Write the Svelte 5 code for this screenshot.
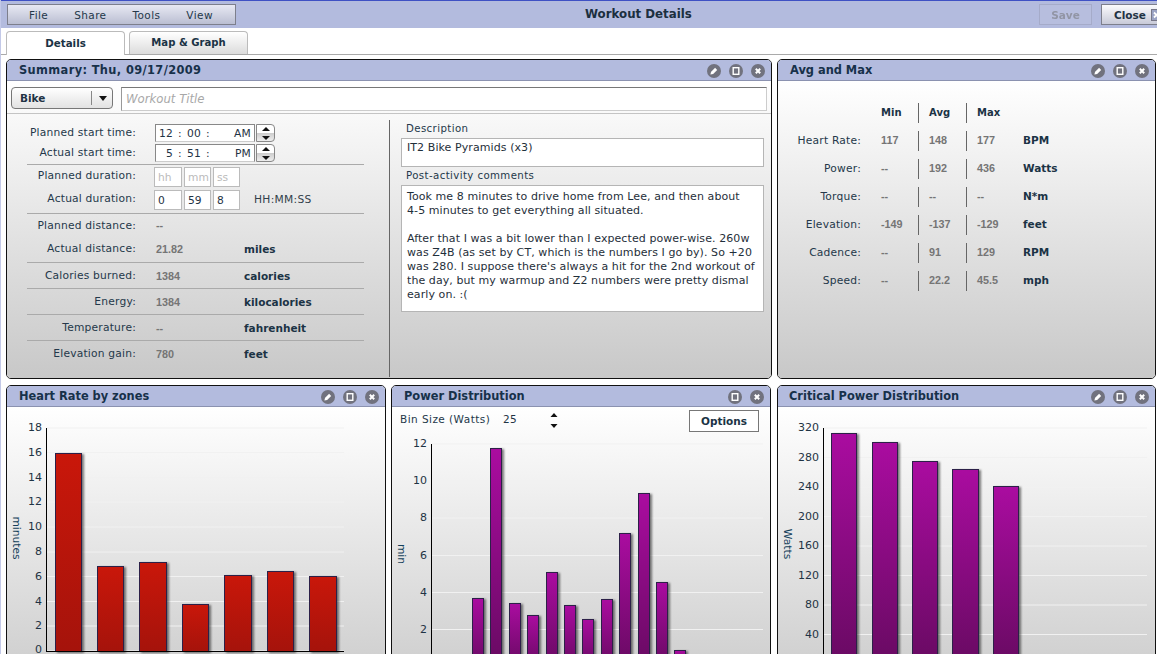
<script>
  const menu = ['File', 'Share', 'Tools', 'View'];
  const stats = [
    { label: 'Heart Rate:', min: '117', avg: '148', max: '177', unit: 'BPM' },
    { label: 'Power:', min: '--', avg: '192', max: '436', unit: 'Watts' },
    { label: 'Torque:', min: '--', avg: '--', max: '--', unit: 'N*m' },
    { label: 'Elevation:', min: '-149', avg: '-137', max: '-129', unit: 'feet' },
    { label: 'Cadence:', min: '--', avg: '91', max: '129', unit: 'RPM' },
    { label: 'Speed:', min: '--', avg: '22.2', max: '45.5', unit: 'mph' }
  ];
  const measures = [
    { label: 'Calories burned:', value: '1384', unit: 'calories' },
    { label: 'Energy:', value: '1384', unit: 'kilocalories' },
    { label: 'Temperature:', value: '--', unit: 'fahrenheit' },
    { label: 'Elevation gain:', value: '780', unit: 'feet' }
  ];
  const hr = {
    view: '7 407 378 320', gridEnd: 344, axis: 46, top: 428, bottom: 651,
    ticks: [[18,428],[16,452.5],[14,477.5],[12,502],[10,527],[8,552],[6,576.5],[4,601.5],[2,626],[0,651,650]],
    bars: [[55,82,453],[97,124,566],[139,167,562],[182,209,604],[224,252,575],[267,294,571],[309,337,576]],
    title: 'minutes', tx: 16, ty: 538, fill: 'url(#red)', labelEnd: 42
  };
  const pw = {
    view: '392 437 378 290', gridEnd: 763, axis: 431, top: 444, bottom: 666,
    ticks: [[12,444],[10,481],[8,518],[6,555.5],[4,592.5],[2,629.5]],
    bars: [[472,484,598],[490,502,448],[509,521,603],[527,539,615],[546,558,572],[564,576,605],[582,594,619],[601,613,599],[619,631,533],[638,650,493],[656,668,582],[674,686,650]],
    title: 'min', tx: 401, ty: 554, fill: 'url(#purple)', labelEnd: 427
  };
  const cp = {
    view: '778 407 377 320', gridEnd: 1147, axis: 823, top: 428, bottom: 664,
    ticks: [[320,428],[280,457.5],[240,487],[200,516.5],[160,546],[120,575.5],[80,605],[40,634.5]],
    bars: [[831,857,433],[872,898,442],[912,938,461],[952,979,469],[993,1019,486]],
    title: 'Watts', tx: 787, ty: 544, fill: 'url(#purple)', labelEnd: 819
  };
</script>

{#snippet tools(pencil)}
  <div class="tools">
    {#if pencil}
      <svg class="tool" viewBox="0 0 14 14"><circle cx="7" cy="7" r="7" /><path class="w" d="M3.4 10.6l.7-2.8 4-4 2.1 2.1-4 4z" /></svg>
    {/if}
    <svg class="tool" viewBox="0 0 14 14"><circle cx="7" cy="7" r="7" /><rect x="4.2" y="3.7" width="5.6" height="6.6" class="o" /></svg>
    <svg class="tool" viewBox="0 0 14 14"><circle cx="7" cy="7" r="7" /><path class="x" d="M4.8 4.8l4.4 4.4M9.2 4.8l-4.4 4.4" /></svg>
  </div>
{/snippet}

{#snippet spinner()}
  <span class="spin">
    <svg width="20" height="19" viewBox="0 0 20 19"><path d="M6 7l4-4 4 4z" /><path d="M6 12h8l-4 4z" /></svg>
  </span>
{/snippet}

{#snippet chart(c)}
  <svg class="chart" viewBox={c.view}>
    {#each c.ticks as t}
      <line x1={c.axis + 1} x2={c.gridEnd} y1={t[1]} y2={t[1]} class="grid" />
      <text x={c.labelEnd} y={(t[2] ?? t[1]) + 3} text-anchor="end" class="tick">{t[0]}</text>
    {/each}
    {#each c.bars as b}
      <rect x={b[0] + 0.5} y={b[2] + 0.5} width={b[1] - b[0] - 1} height={c.bottom - b[2]} fill={c.fill} class="bar" />
    {/each}
    <line x1={c.axis + 0.5} x2={c.axis + 0.5} y1={c.top} y2={c.bottom + 1} class="axis" />
    <line x1={c.axis} x2={c.gridEnd} y1={c.bottom + 0.5} y2={c.bottom + 0.5} class="axis" />
    <text class="ytitle" transform="translate({c.tx} {c.ty}) rotate(90)" text-anchor="middle" dy="3.5">{c.title}</text>
  </svg>
{/snippet}

<svg width="0" height="0" class="defs">
  <defs>
    <linearGradient id="red" x1="0" y1="0" x2="0" y2="1"><stop offset="0" stop-color="#c9170a" /><stop offset="1" stop-color="#a5130b" /></linearGradient>
    <linearGradient id="purple" x1="0" y1="0" x2="0" y2="1"><stop offset="0" stop-color="#aa0ca0" /><stop offset="1" stop-color="#680a62" /></linearGradient>
  </defs>
</svg>

<div class="page">
  <header class="topbar">
    <nav class="menu">
      {#each menu as m}<span>{m}</span>{/each}
    </nav>
    <h1>Workout Details</h1>
    <button class="btn save">Save</button>
    <button class="btn close">Close<svg class="closex" width="11" height="12" viewBox="0 0 11 12"><rect x="0.5" y="0.5" width="10" height="11" /><path d="M3 3.5l5 5M8 3.5l-5 5" /></svg></button>
  </header>

  <div class="tabs">
    <div class="tab active">Details</div>
    <div class="tab">Map &amp; Graph</div>
  </div>

  <main class="main">
    <div class="row top">
      <section class="panel summary">
        <div class="phead"><h2 class="sumt">Summary: Thu, 09/17/2009</h2>{@render tools(true)}</div>
        <div class="pbody">
          <div class="titlerow">
            <div class="select"><b>Bike</b><span class="arrow"></span></div>
            <div class="titleinput">Workout Title</div>
          </div>
          <div class="cols">
            <div class="leftcol">
              <div class="f time"><label>Planned start time:</label><div class="tbox"><span class="hh">12</span><span class="co">:</span><span class="mm">00</span><span class="co">:</span><span class="ap">AM</span></div>{@render spinner()}</div>
              <div class="f time"><label>Actual start time:</label><div class="tbox"><span class="hh">5</span><span class="co">:</span><span class="mm">51</span><span class="co">:</span><span class="ap">PM</span></div>{@render spinner()}</div>
              <div class="sep s1"></div>
              <div class="f dur"><label>Planned duration:</label><div class="dbox ph">hh</div><div class="dbox ph">mm</div><div class="dbox ph">ss</div></div>
              <div class="f dur"><label>Actual duration:</label><div class="dbox">0</div><div class="dbox">59</div><div class="dbox">8</div><span class="hms">HH:MM:SS</span></div>
              <div class="sep s2"></div>
              <div class="f m1"><label>Planned distance:</label><span class="val">--</span></div>
              <div class="f m2"><label>Actual distance:</label><span class="val">21.82</span><span class="unit">miles</span></div>
              {#each measures as m}
                <div class="sep"></div>
                <div class="f m3"><label>{m.label}</label><span class="val">{m.value}</span><span class="unit">{m.unit}</span></div>
              {/each}
            </div>
            <div class="rightcol">
              <div class="lab">Description</div>
              <div class="box desc">IT2 Bike Pyramids (x3)</div>
              <div class="lab l2">Post-activity comments</div>
              <div class="box comm">Took me 8 minutes to drive home from Lee, and then about
4-5 minutes to get everything all situated.

After that I was a bit lower than I expected power-wise. 260w
was Z4B (as set by CT, which is the numbers I go by). So +20
was 280. I suppose there's always a hit for the 2nd workout of
the day, but my warmup and Z2 numbers were pretty dismal
early on. :(</div>
            </div>
          </div>
        </div>
      </section>

      <section class="panel avg">
        <div class="phead"><h2>Avg and Max</h2>{@render tools(true)}</div>
        <div class="pbody">
          <div class="stats">
            <span></span><b class="c1 hd">Min</b><b class="c2 hd">Avg</b><b class="c3 hd">Max</b><span></span>
            {#each stats as s}
              <span class="sl">{s.label}</span>
              <span class="c1 v">{s.min}</span>
              <span class="c2 v">{s.avg}</span>
              <span class="c3 v">{s.max}</span>
              <b class="su">{s.unit}</b>
            {/each}
          </div>
        </div>
      </section>
    </div>

    <div class="row bottom">
      <section class="panel b1">
        <div class="phead"><h2>Heart Rate by zones</h2>{@render tools(true)}</div>
        <div class="pbody">{@render chart(hr)}</div>
      </section>
      <section class="panel b2">
        <div class="phead"><h2>Power Distribution</h2>{@render tools(false)}</div>
        <div class="pbody">
          <div class="bin">
            <span class="binl">Bin Size (Watts)</span><span class="binv">25</span>
            <svg class="binspin" width="10" height="20" viewBox="0 0 10 20"><path d="M1.5 5L5 1l3.5 4zM1.5 12h7L5 16z" /></svg>
            <button class="opt">Options</button>
          </div>
          {@render chart(pw)}
        </div>
      </section>
      <section class="panel b3">
        <div class="phead"><h2>Critical Power Distribution</h2>{@render tools(true)}</div>
        <div class="pbody">{@render chart(cp)}</div>
      </section>
    </div>
  </main>
</div>

<style>
  :global(body) { margin: 0; background: #fff; overflow: hidden; }
  .defs { position: absolute; }
  .page {
    width: 1157px; height: 654px; overflow: hidden; box-sizing: border-box;
    border-left: 1px solid #c3c9e8;
    font: 11px "DejaVu Sans", Verdana, sans-serif; color: #1f3344; background: #fff;
  }
  .topbar {
    height: 28px; box-sizing: border-box; margin-left: -1px; background: #b3bbde; border-top: 1px solid #3f51c4;
    display: flex; align-items: flex-start; padding: 3px 0 0 7px; position: relative; white-space: nowrap;
  }
  .menu {
    width: 229px; height: 21px; box-sizing: border-box; display: flex; padding-left: 21px; gap: 26px; align-items: center;
    background: linear-gradient(#e8e9f3, #babed2); border: 1px solid #7d7f8c;
  }
  .menu span { font-size: 10.5px; color: #24384a; letter-spacing: .4px; }
  h1 { margin: 0; font-size: 11.8px; font-weight: bold; position: absolute; left: 585px; top: 6px; color: #1b2f40; }
  .btn {
    font: bold 10.5px "DejaVu Sans", sans-serif; height: 21px; padding: 0; box-sizing: border-box; color: #1f3344;
    background: linear-gradient(#fbfbfd, #c8cad8); border: 1px solid #7d7f8c;
  }
  .save { width: 53px; margin-left: auto; opacity: .55; color: #777; margin-right: 9px; background: #bcc2de; border-color: #9a9fb8; }
  .close { width: 60px; margin-right: -4px; text-align: left; padding-left: 12px; display: flex; align-items: center; gap: 5px; }
  .closex { flex: none; }
  .closex rect { fill: #9aa3c4; stroke: #778; }
  .closex path { stroke: #fff; stroke-width: 1.8; fill: none; }
  .tabs {
    height: 27px; box-sizing: border-box; display: flex; gap: 4px; padding: 3px 0 0 5px; border-bottom: 1px solid #aaa;
  }
  .tab {
    width: 119px; box-sizing: border-box; border: 1px solid #bbb; border-bottom: 0; border-radius: 4px 4px 0 0; text-align: center;
    font-weight: bold; font-size: 10.1px; line-height: 21px; background: linear-gradient(#fff, #dcdcdc); color: #1b3345; height: 23px;
  }
  .tab.active { background: #fff; line-height: 23px; height: 24px; margin-bottom: -1px; font-size: 10.3px; }
  .main { padding: 4px 0 0 5px; }
  .row { display: flex; }
  .top { height: 320px; margin-bottom: 6px; }
  .bottom { height: 320px; }
  .panel {
    box-sizing: border-box; border: 1px solid #111; border-radius: 5px; display: flex; flex-direction: column; overflow: hidden; flex: none;
  }
  .summary { width: 766px; margin-right: 5px; }
  .avg { width: 379px; }
  .b1 { width: 380px; margin-right: 5px; }
  .b2 { width: 380px; margin-right: 6px; }
  .b3 { width: 379px; }
  .b3 .phead { padding-left: 11px; }
  .phead {
    height: 21px; flex: none; box-sizing: border-box; background: #b3bbde; border-bottom: 1px solid #8b92b0;
    display: flex; align-items: center; padding: 0 6px 0 12px; justify-content: space-between;
  }
  h2 { margin: 0; font-size: 11.4px; color: #17314a; font-weight: bold; }
  .sumt { letter-spacing: .38px; }
  .tools { display: flex; gap: 8px; padding-top: 1px; }
  .tool { width: 14px; height: 14px; display: block; }
  .tool circle { fill: #71727e; }
  .w { fill: #fff; }
  .o { fill: none; stroke: #fff; stroke-width: 1.4; }
  .x { fill: none; stroke: #fff; stroke-width: 2; }
  .pbody { flex: 1; background: linear-gradient(#fff, #c8c8c8); min-height: 0; }

  .titlerow { display: flex; padding: 6px 4px 2px 4px; gap: 8px; border-bottom: 1px solid #c4c4c4; height: 33px; box-sizing: border-box; }
  .select {
    width: 102px; height: 22px; box-sizing: border-box; border: 1px solid #777; border-radius: 4px; background: linear-gradient(#fff, #e2e2e2);
    display: flex; align-items: center; padding-left: 8px; position: relative; font-size: 10.5px;
  }
  .arrow { position: absolute; left: 79px; top: 3px; height: 14px; border-left: 1px solid #888; width: 21px; }
  .arrow::after { content: ""; position: absolute; left: 7px; top: 5px; border: 4px solid transparent; border-top: 5px solid #111; border-bottom: 0; }
  .titleinput { width: 646px; height: 24px; box-sizing: border-box; background: #fff; border: 1px solid #ccc; border-top-color: #777; border-left-color: #999; font-style: italic; color: #a8a8a8; font-size: 11.7px; padding: 4px 4px; }
  .cols { display: flex; height: 266px; }
  .leftcol { width: 383px; box-sizing: border-box; border-right: 1px solid #666; height: 257px; margin-top: 6px; padding: 3px 25px 0 20px; flex: none; }
  .f { display: flex; align-items: center; }
  label { width: 109px; text-align: right; flex: none; margin-right: 19px; color: #24384a; font-size: 10.7px; letter-spacing: .2px; }
  .time { height: 20px; }
  .time label { padding-bottom: 2px; }
  .tbox { width: 100px; height: 18px; box-sizing: border-box; background: #fff; border: 1px solid #888; border-bottom-color: #ccc; display: grid; grid-template-columns: 17px 14px 16px 10px 1fr; align-items: center; font-size: 10.7px; letter-spacing: .2px; }
  .tbox .hh { text-align: right; }
  .tbox .co { text-align: center; }
  .tbox .ap { text-align: right; padding-right: 3px; }
  .spin { display: block; width: 19px; height: 18px; box-sizing: border-box; border: 1px solid #888; border-radius: 0 4px 4px 0; background: linear-gradient(#fff 50%, #ccc 50%, #eee); margin-left: 1px; overflow: hidden; }
  .spin svg { display: block; margin: -1px 0 0 -1px; }
  .spin path { fill: #111; }
  .sep { height: 1px; background: #aaa; }
  .s1 { margin-top: 1px; margin-bottom: 2px; }
  .dur { height: 23px; gap: 2px; align-items: flex-start; }
  .dur label { padding-top: 2px; margin-right: 16px; }
  .dbox { width: 27px; height: 20px; box-sizing: border-box; border: 1px solid #bbb; background: #fff; padding: 3px 3px; font-size: 10.7px; color: #1f3344; }
  .dbox:nth-of-type(1) { width: 28px; }
  .dbox.ph { color: #bbb; }
  .hms { margin-left: 12px; font-size: 10.7px; padding-top: 3px; color: #333f4a; letter-spacing: .3px; }
  .val { font: bold 10.8px "Liberation Sans", Arial, sans-serif; color: #757575; width: 89px; flex: none; box-sizing: border-box; padding-left: 1px; }
  .unit { font-weight: bold; font-size: 10.5px; color: #1b3345; }
  .m1 { height: 22px; }
  .m2 { height: 26px; padding-bottom: 1px; box-sizing: border-box; }
  .m3 { height: 25px; }
  .rightcol { padding: 9px 0 0 11px; width: 364px; }
  .lab { font-size: 10.2px; letter-spacing: .4px; padding-left: 5px; height: 11px; line-height: 12px; color: #24384a; }
  .l2 { margin-top: 3px; height: 15px; }
  .box { width: 363px; box-sizing: border-box; background: #fff; border: 1px solid #b5b5b5; padding: 4px 5px; font-size: 11px; line-height: 14px; white-space: pre; color: #1f2f3a; letter-spacing: .08px; }
  .desc { height: 29px; margin-top: 4px; margin-bottom: 3px; padding-top: 2px; }
  .comm { height: 127px; }

  .stats {
    display: grid; grid-template-columns: 84px 57px 48px 56px auto; grid-auto-rows: 20px; row-gap: 8px; padding-top: 22px; align-items: center;
  }
  .stats > * { height: 20px; line-height: 19px; box-sizing: border-box; }
  .hd { font-size: 10px; color: #1b3345; }
  .c1 { padding-left: 19px; border-right: 1px solid #666; }
  .c2 { padding-left: 10px; border-right: 1px solid #666; }
  .c3 { padding-left: 10px; }
  .sl { text-align: right; font-size: 10.7px; color: #24384a; padding-right: 1px; letter-spacing: .2px; }
  .v { font: bold 10.8px/19px "Liberation Sans", Arial, sans-serif; color: #757575; }
  .su { font-size: 10.5px; color: #1b3345; }

  .chart { display: block; width: 100%; height: 320px; overflow: visible; }
  .b2 .chart { height: 290px; }
  .grid { stroke: #f1f1f1; stroke-width: 1; }
  .axis { stroke: #000; stroke-width: 1; }
  .tick { font: 11px "DejaVu Sans", sans-serif; fill: #1f3344; }
  .ytitle { font: 10.7px "DejaVu Sans", sans-serif; fill: #14405a; }
  .bar { stroke: #2c2048; stroke-width: 1; filter: drop-shadow(2px 1px 1px rgba(0,0,0,.5)); }

  .bin { height: 30px; box-sizing: border-box; display: flex; align-items: flex-start; padding: 3px 11px 0 8px; }
  .binl { font-size: 10.5px; padding-top: 3px; width: 103px; color: #24384a; letter-spacing: .45px; white-space: nowrap; }
  .binv { font-size: 10.5px; padding-top: 3px; width: 46px; letter-spacing: .3px; }
  .binspin { margin-top: 2px; }
  .binspin path { fill: #111; }
  .opt { margin-left: auto; width: 70px; height: 22px; box-sizing: border-box; background: #fff; border: 1px solid #777; font: bold 10.5px "DejaVu Sans", sans-serif; color: #1b3345; padding: 0; }
</style>
